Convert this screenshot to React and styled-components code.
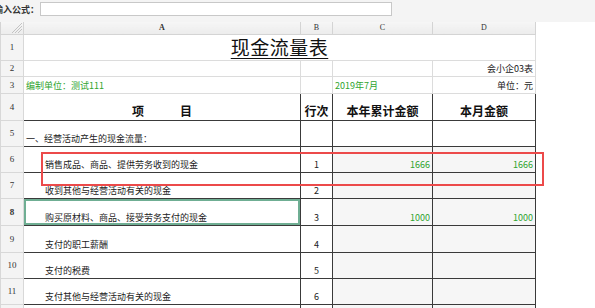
import React from 'react'
import styled, { createGlobalStyle, css } from 'styled-components'

const GlobalStyle = createGlobalStyle`
  html, body {
    margin: 0;
    padding: 0;
    background: #fff;
    font-family: 'Noto Sans CJK SC', 'Liberation Sans', sans-serif;
    color: #222;
  }
`

const FormulaBar = styled.div`
  height: 22px;
  background: #f4f4f4;
  display: flex;
  align-items: flex-start;
  padding-top: 2px;
  box-sizing: border-box;
`

const FormulaLabel = styled.div`
  width: 40px;
  height: 14px;
  display: flex;
  justify-content: flex-end;
  align-items: center;
  overflow: hidden;
  white-space: nowrap;
  font-size: 9px;
  font-weight: 700;
  color: #333;
  padding-right: 1px;
  box-sizing: border-box;
`

const FormulaInput = styled.div`
  width: 352px;
  height: 14px;
  background: #fff;
  border: 1px solid #c8c8c8;
  box-sizing: border-box;
`

const Sheet = styled.div`
  position: relative;
  width: 535px;
`

const Grid = styled.table`
  border-collapse: collapse;
  table-layout: fixed;
  width: 535px;
  font-size: 9px;
  line-height: 1.1;
`

const Row = styled.tr`
  height: ${(p) => p.$h}px;
`

const ColHead = styled.th`
  height: 12px;
  padding: 0;
  background: linear-gradient(#f6f6f6, #ececec);
  border: 1px solid #d4d4d4;
  border-top: none;
  font-family: 'Liberation Serif', serif;
  font-size: 8px;
  line-height: 1;
  font-weight: ${(p) => (p.$active ? 700 : 400)};
  color: #333;
  text-align: center;
  vertical-align: middle;
`

const Corner = styled(ColHead)`
  position: relative;
  svg {
    position: absolute;
    right: 1px;
    bottom: 1px;
  }
`

const RowHead = styled.td`
  padding: 0;
  background: #f4f4f4;
  border: 1px solid #d8d8d8;
  font-family: 'Liberation Serif', serif;
  font-size: 9px;
  line-height: 1;
  font-weight: ${(p) => (p.$active ? 700 : 400)};
  color: #333;
  text-align: center;
  vertical-align: middle;
`

const Cell = styled.td`
  padding: 0 2px 2px 2px;
  border: 1px solid ${(p) => (p.$dark ? '#3a3a3a' : '#dcdcdc')};
  background: ${(p) => (p.$shade ? '#f6f6f6' : '#fff')};
  text-align: ${(p) => p.$align || 'left'};
  vertical-align: ${(p) => p.$valign || 'bottom'};
  white-space: nowrap;
  color: ${(p) => (p.$green ? '#2ea42e' : '#222')};
  ${(p) =>
    p.$indent &&
    css`
      padding-left: 21px;
    `}
  ${(p) =>
    p.$selected &&
    css`
      box-shadow: inset 0 0 0 2px #6fae93;
    `}
`

const Title = styled.span`
  display: inline-block;
  font-size: 19px;
  line-height: 22px;
  text-decoration: underline;
  text-underline-offset: 3px;
  color: #111;
  letter-spacing: 0.5px;
`

const HeadText = styled.span`
  font-size: 12px;
  line-height: 1;
  font-weight: 700;
  color: #111;
  white-space: pre;
`

const Highlight = styled.div`
  position: absolute;
  left: 41px;
  top: 130px;
  width: 503px;
  height: 34px;
  border: 2px solid #ec4a4a;
  box-sizing: border-box;
  pointer-events: none;
`

const items = [
  { n: 6, h: 26, name: '销售成品、商品、提供劳务收到的现金', line: '1', year: '1666', month: '1666' },
  { n: 7, h: 26, name: '收到其他与经营活动有关的现金', line: '2' },
  { n: 8, h: 27, name: '购买原材料、商品、接受劳务支付的现金', line: '3', year: '1000', month: '1000', selected: true },
  { n: 9, h: 27, name: '支付的职工薪酬', line: '4' },
  { n: 10, h: 26, name: '支付的税费', line: '5' },
  { n: 11, h: 26, name: '支付其他与经营活动有关的现金', line: '6' },
  { n: 12, h: 26, name: '', line: '' },
]

const Corner3 = () => (
  <svg width='10' height='10' viewBox='0 0 10 10'>
    <path d='M10 0 L0 10 M10 3 L3 10 M10 6 L6 10' stroke='#b8b8b8' strokeWidth='0.8' />
  </svg>
)

const App = () => {
  return (
    <>
      <GlobalStyle />
      <FormulaBar>
        <FormulaLabel>输入公式：</FormulaLabel>
        <FormulaInput />
      </FormulaBar>
      <Sheet>
        <Grid>
          <colgroup>
            <col style={{ width: 23 }} />
            <col style={{ width: 277 }} />
            <col style={{ width: 32 }} />
            <col style={{ width: 100 }} />
            <col style={{ width: 103 }} />
          </colgroup>
          <thead>
            <tr>
              <Corner>
                <Corner3 />
              </Corner>
              <ColHead $active>A</ColHead>
              <ColHead>B</ColHead>
              <ColHead>C</ColHead>
              <ColHead>D</ColHead>
            </tr>
          </thead>
          <tbody>
            <Row $h={26}>
              <RowHead>1</RowHead>
              <Cell colSpan={4} $align='center' $valign='middle'>
                <Title>现金流量表</Title>
              </Cell>
            </Row>
            <Row $h={16}>
              <RowHead>2</RowHead>
              <Cell />
              <Cell />
              <Cell />
              <Cell $align='right'>会小企03表</Cell>
            </Row>
            <Row $h={17}>
              <RowHead>3</RowHead>
              <Cell $green>编制单位：测试111</Cell>
              <Cell />
              <Cell $green>2019年7月</Cell>
              <Cell $align='right'>单位：元</Cell>
            </Row>
            <Row $h={27}>
              <RowHead>4</RowHead>
              <Cell $dark $align='center'>
                <HeadText>{'项　　　目'}</HeadText>
              </Cell>
              <Cell $dark $align='center'>
                <HeadText>行次</HeadText>
              </Cell>
              <Cell $dark $align='center'>
                <HeadText>本年累计金额</HeadText>
              </Cell>
              <Cell $dark $align='center'>
                <HeadText>本月金额</HeadText>
              </Cell>
            </Row>
            <Row $h={26}>
              <RowHead>5</RowHead>
              <Cell $dark>一、经营活动产生的现金流量：</Cell>
              <Cell $dark />
              <Cell $dark />
              <Cell $dark />
            </Row>
            {items.map((it) => (
              <Row $h={it.h} key={it.n}>
                <RowHead $active={it.selected}>{it.n}</RowHead>
                <Cell $dark $indent $selected={it.selected}>
                  {it.name}
                </Cell>
                <Cell $dark $align='center'>
                  {it.line}
                </Cell>
                <Cell $dark $shade $green $align='right'>
                  {it.year}
                </Cell>
                <Cell $dark $shade $green $align='right'>
                  {it.month}
                </Cell>
              </Row>
            ))}
          </tbody>
        </Grid>
        <Highlight />
      </Sheet>
    </>
  )
}

export default App
